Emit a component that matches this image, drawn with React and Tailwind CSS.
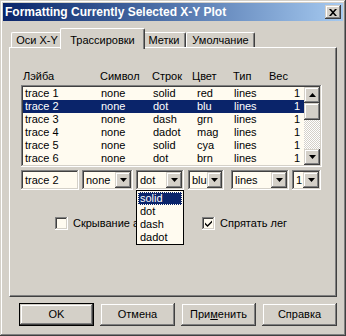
import React from 'react';

const raised = 'shadow-[inset_-1px_-1px_#404040,inset_1px_1px_#d4d0c8,inset_-2px_-2px_#808080,inset_2px_2px_#ffffff]';
const sunken = 'shadow-[inset_-1px_-1px_#ffffff,inset_1px_1px_#808080,inset_-2px_-2px_#d4d0c8,inset_2px_2px_#404040]';

const traces = [
    ['trace 1', 'none', 'solid', 'red', 'lines', '1'],
    ['trace 2', 'none', 'dot', 'blu', 'lines', '1'],
    ['trace 3', 'none', 'dash', 'grn', 'lines', '1'],
    ['trace 4', 'none', 'dadot', 'mag', 'lines', '1'],
    ['trace 5', 'none', 'solid', 'cya', 'lines', '1'],
    ['trace 6', 'none', 'dot', 'brn', 'lines', '1'],
];

const Arrow = ({ up }) => (
    <svg width="7" height="4" viewBox="0 0 7 4" className={up ? 'rotate-180' : ''}>
        <path d="M0 0h7L3.5 4z" fill="#000" />
    </svg>
);

function Combo({ value, width, children }) {
    return (
        <div className={`relative h-[20px] ${width} bg-[#fffbf0] ${sunken} flex items-center pl-[4px] pr-[2px]`}>
            <span className="flex-1 leading-none">{value}</span>
            <div className={`w-[16px] h-[16px] bg-[#d4d0c8] ${raised} flex items-center justify-center`}>
                <Arrow />
            </div>
            {children}
        </div>
    );
}

function Checkbox({ checked, label }) {
    return (
        <div className="flex items-center gap-[5px]">
            <div className={`shrink-0 w-[13px] h-[13px] bg-[#fffbf0] ${sunken} flex items-center justify-center`}>
                {checked && (
                    <svg width="7" height="7" viewBox="0 0 7 7">
                        <path d="M0 2.5l2.5 2.5L7 0.5v2L2.5 7 0 4.5z" fill="#000" />
                    </svg>
                )}
            </div>
            <span className="whitespace-nowrap">{label}</span>
        </div>
    );
}

export default function App() {
    return (
        <div className={`w-[346px] h-[336px] bg-[#d4d0c8] p-[3px] flex flex-col text-[11px] text-black font-['Liberation_Sans',Arial,sans-serif] shadow-[inset_-1px_-1px_#404040,inset_1px_1px_#d4d0c8,inset_-2px_-2px_#808080,inset_2px_2px_#ffffff]`}>
            {/* title bar */}
            <div className="h-[18px] bg-linear-to-r from-[#0a246a] to-[#a6caf0] flex items-center justify-between pl-[2px] pr-[2px]">
                <span className="text-white font-bold text-[12px] leading-none whitespace-nowrap">Formatting Currently Selected X-Y Plot</span>
                <div className={`w-[16px] h-[14px] bg-[#d4d0c8] ${raised} flex items-center justify-center`}>
                    <svg width="8" height="7" viewBox="0 0 8 7">
                        <path d="M0 0h2l2 2.3L6 0h2L5 3.5 8 7H6L4 4.7 2 7H0l3-3.5z" fill="#000" />
                    </svg>
                </div>
            </div>

            <div className="px-[6px] mt-[7px]">
                {/* tabs */}
                <div className="h-[19px] flex items-end pl-[2px]">
                    <div className="w-[51px] h-[15px] border-l border-t border-white rounded-tl-[2px] flex items-center justify-center">Оси X-Y</div>
                    <div className="relative z-10 w-[85px] h-[21px] -mx-[2px] -mb-[2px] bg-[#d4d0c8] border-l border-t border-white border-r border-r-[#404040] rounded-t-[2px] shadow-[inset_-1px_0_#808080] flex items-start justify-center pt-[3px]">Трассировки</div>
                    <div className="w-[43px] h-[15px] border-t border-white border-r border-r-[#404040] shadow-[inset_-1px_0_#808080] rounded-tr-[2px] flex items-center justify-center">Метки</div>
                    <div className="w-[69px] h-[15px] border-l border-t border-white border-r border-r-[#404040] shadow-[inset_-1px_0_#808080] rounded-t-[2px] flex items-center justify-center">Умолчание</div>
                </div>

                {/* panel */}
                <div className="h-[250px] border-l border-t border-white border-r border-b border-r-[#404040] border-b-[#404040] shadow-[inset_-1px_-1px_#808080] pl-[11px] pt-[22px]">
                    <div className="flex h-[13px] items-center pl-[2px] leading-none">
                        <span className="w-[77px]">Лэйба</span>
                        <span className="w-[52px]">Символ</span>
                        <span className="w-[40px]">Строк</span>
                        <span className="w-[41px]">Цвет</span>
                        <span className="w-[36px]">Тип</span>
                        <span>Вес</span>
                    </div>

                    {/* list */}
                    <div className={`mt-[2px] w-[301px] h-[82px] bg-[#fffbf0] ${sunken} p-[2px] flex`}>
                        <div className="w-[281px] flex flex-col">
                            {traces.map((t, i) => (
                                <div key={i} className={`h-[13px] flex items-center leading-none pl-[2px] ${i === 1 ? 'bg-[#0a246a] text-white' : ''}`}>
                                    <span className="w-[76px]">{t[0]}</span>
                                    <span className="w-[52px]">{t[1]}</span>
                                    <span className="w-[44px]">{t[2]}</span>
                                    <span className="w-[37px]">{t[3]}</span>
                                    <span className="w-[36px]">{t[4]}</span>
                                    <span className="w-[30px] text-right">{t[5]}</span>
                                </div>
                            ))}
                        </div>
                        <div className="w-[16px] flex flex-col bg-[repeating-conic-gradient(#d4d0c8_0%_25%,#ffffff_0%_50%)] bg-[length:2px_2px]">
                            <div className={`h-[16px] bg-[#d4d0c8] ${raised} flex items-center justify-center`}><Arrow up /></div>
                            <div className={`h-[17px] bg-[#d4d0c8] ${raised}`} />
                            <div className="flex-1" />
                            <div className={`h-[16px] bg-[#d4d0c8] ${raised} flex items-center justify-center`}><Arrow /></div>
                        </div>
                    </div>

                    {/* edit row */}
                    <div className="mt-[3px] flex items-center">
                        <div className={`w-[58px] h-[20px] bg-[#fffbf0] ${sunken} flex items-center pl-[4px] leading-none`}>trace 2</div>
                        <div className="ml-[3px]"><Combo value="none" width="w-[51px]" /></div>
                        <div className="ml-[3px] relative z-20">
                            <Combo value="dot" width="w-[48px]">
                                <div className="absolute left-0 top-[20px] w-[48px] bg-[#fffbf0] border border-black flex flex-col">
                                    <div className="h-[13px] mx-[1px] mt-[1px] bg-[#0a246a] text-white outline outline-1 outline-dotted outline-[#fffbf0] -outline-offset-1 flex items-center pl-[2px] leading-none">solid</div>
                                    <div className="h-[13px] flex items-center pl-[3px] leading-none">dot</div>
                                    <div className="h-[13px] flex items-center pl-[3px] leading-none">dash</div>
                                    <div className="h-[13px] flex items-center pl-[3px] leading-none">dadot</div>
                                </div>
                            </Combo>
                        </div>
                        <div className="ml-[4px]"><Combo value="blu" width="w-[36px]" /></div>
                        <div className="ml-[7px]"><Combo value="lines" width="w-[58px]" /></div>
                        <div className="ml-[3px]"><Combo value="1" width="w-[29px]" /></div>
                    </div>

                    {/* checkboxes */}
                    <div className="mt-[25px] flex items-center">
                        <div className="ml-[34px] w-[81px] overflow-hidden"><Checkbox label="Скрывание а" /></div>
                        <div className="ml-[66px]"><Checkbox checked label="Спрятать лег" /></div>
                    </div>
                </div>
            </div>

            {/* buttons */}
            <div className="mt-[6px] pl-[16px] flex gap-[6px]">
                <div className="w-[75px] h-[23px] border border-black">
                    <div className={`w-full h-full bg-[#d4d0c8] ${raised} flex items-center justify-center`}>OK</div>
                </div>
                <div className={`w-[75px] h-[23px] bg-[#d4d0c8] ${raised} flex items-center justify-center`}>Отмена</div>
                <div className={`w-[75px] h-[23px] bg-[#d4d0c8] ${raised} flex items-center justify-center`}>При<span className="underline">м</span>енить</div>
                <div className={`w-[75px] h-[23px] bg-[#d4d0c8] ${raised} flex items-center justify-center`}>Справка</div>
            </div>
        </div>
    );
}
